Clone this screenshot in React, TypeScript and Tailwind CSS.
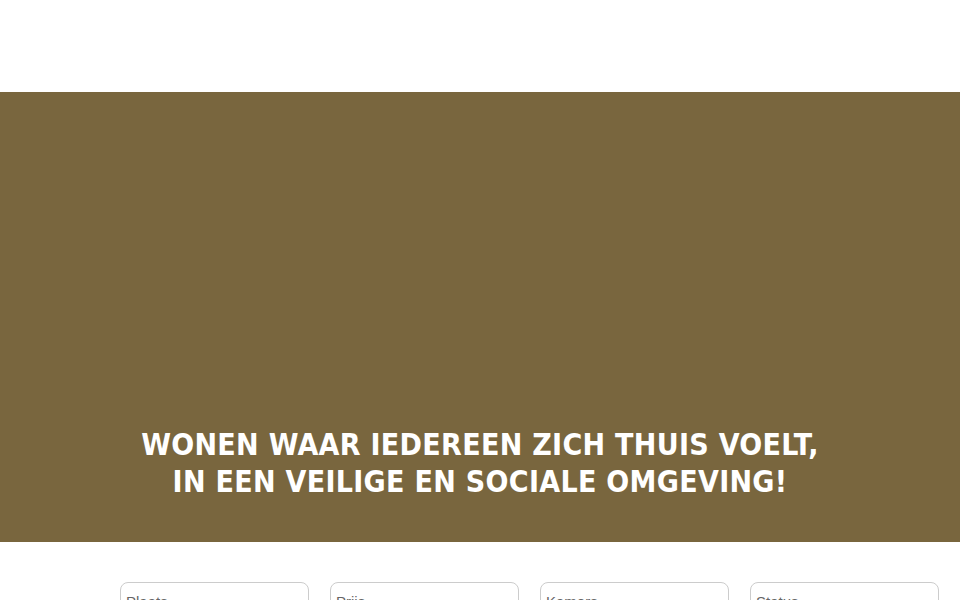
import React from "react";

const filters = ["Plaats", "Prijs", "Kamers", "Status"];

export default function App() {
    return (
        <div className="min-h-screen bg-white" style={{ fontFamily: '"Liberation Sans", Arial, sans-serif' }}>
            {/* Header */}
            <header className="h-[92px] bg-white"></header>

            {/* Hero */}
            <section className="h-[450px] bg-[#79663e] flex flex-col justify-end items-center pb-[42px]">
                <h1
                    className="text-white text-center uppercase font-bold text-[30px] leading-[37px] tracking-[0.3px]"
                    style={{ fontFamily: '"DejaVu Sans Condensed", "DejaVu Sans", sans-serif' }}
                >
                    Wonen waar iedereen zich thuis voelt,
                    <br />
                    in een veilige en sociale omgeving!
                </h1>
            </section>

            {/* Filters */}
            <section className="pt-[40px] pl-[120px] flex gap-[21px]">
                {filters.map((label) => (
                    <div key={label} className="w-[189px] h-[48px] border border-[#cccccc] rounded-[8px] px-[5px] pt-[10px]">
                        <span className="block text-[15px] leading-[18px] text-[#666666]">{label}</span>
                    </div>
                ))}
            </section>
        </div>
    );
}
